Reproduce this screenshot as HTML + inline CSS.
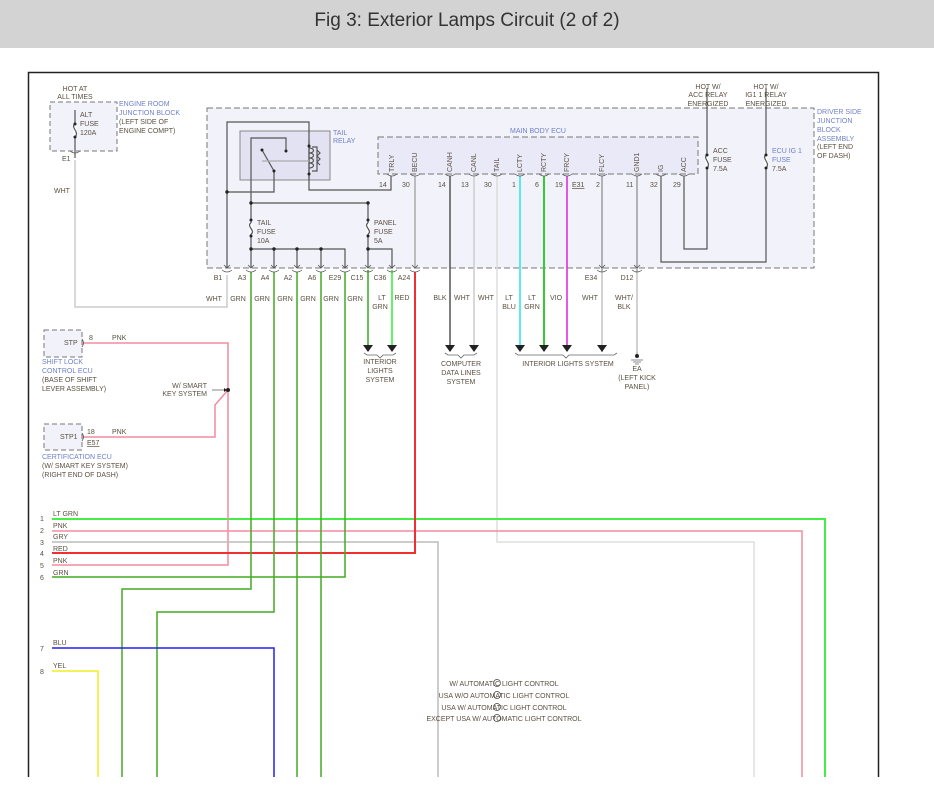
<!DOCTYPE html>
<html><head><meta charset="utf-8"><style>
html,body{margin:0;padding:0;background:#fff;width:934px;height:802px;overflow:hidden}
.hdr{position:absolute;left:0;top:0;width:934px;height:48px;background:#d3d3d3;text-align:center;font:19px "Liberation Sans",sans-serif;color:#333;line-height:42px}
svg{position:absolute;left:0;top:0}
text{font-family:"Liberation Sans",sans-serif;font-size:7px;fill:#5a5040}
.b{fill:#6f80c8}
</style></head><body>
<div class="hdr">Fig 3: Exterior Lamps Circuit (2 of 2)</div>
<svg width="934" height="802" viewBox="0 0 934 802">
<!-- frame -->
<path d="M28.5 777V72.5H878.5V777" fill="none" stroke="#222" stroke-width="1.5"/>
<!-- boxes -->
<rect x="207" y="108" width="607" height="160" fill="#f2f2fb" stroke="#777" stroke-dasharray="6,3"/>
<rect x="378" y="137" width="320" height="37" fill="#e9e9f7" stroke="#777" stroke-dasharray="6,3"/>
<rect x="240" y="131" width="90" height="49" fill="#e2e2f2" stroke="#888"/>
<rect x="50" y="102" width="67" height="49" fill="#f2f2fb" stroke="#777" stroke-dasharray="5,3"/>
<rect x="44" y="330" width="38" height="27" fill="#f2f2fb" stroke="#777" stroke-dasharray="5,3"/>
<rect x="44" y="424" width="38" height="26" fill="#f2f2fb" stroke="#777" stroke-dasharray="5,3"/>
<g fill="none" stroke-width="1.2">
<!-- internal JB wiring -->
<g stroke="#555">
<path d="M227 268V122H309V190H391V176"/>
<path d="M227 192H274V171L262 150"/>
<path d="M251 268V138H286V151"/>
<path d="M251 203H368V268"/>
<path d="M251 249H345V268M274 249V268M297 249V268M321 249V268M368 249H392V268"/>
<path d="M309 140V180"/>
<path d="M309 148c6 0 6 5 0 5c6 0 6 5 0 5c6 0 6 5 0 5c6 0 6 5 0 5" />
<path d="M312 147h5v24h-5M317 150l3 3l-3 3l3 3l-3 3l3 3"/>
<path d="M262 161H309" stroke="#aaa"/>
<path d="M661 176V262H766V88M684 176V249H707V88"/>
<path d="M75 110V158"/>
</g>
<!-- fuses -->
<g stroke="#fff" stroke-width="3"><path d="M251 223V234M368 223V234M707 155V168M766 155V168M75 124V137"/></g>
<g stroke="#555"><path d="M251 223c-5 3 5 8 0 11M368 223c-5 3 5 8 0 11M707 155c-5 3 5 8 0 13M766 155c-5 3 5 8 0 13M75 124c-5 3 5 8 0 13"/></g>
<!-- external wires -->
<path d="M75 160V307H227V275" stroke="#ccc" stroke-width="1.5"/>
<path d="M415 176V268" stroke="#aaa" stroke-width="1.5"/>
<path d="M602 176V352" stroke="#888"/>
<path d="M637 176V352" stroke="#888"/>
<path d="M602 272V352M637 272V352" stroke="#ccc" stroke-width="1.5"/>
<path d="M450 176V350" stroke="#555" stroke-width="1.5"/>
<path d="M474 176V350" stroke="#ccc" stroke-width="1.5"/>
<path d="M497 176V542H754V777" stroke="#ddd" stroke-width="1.5"/>
<path d="M520 176V350" stroke="#22e6ee" stroke-width="1.5"/>
<path d="M544 176V350" stroke="#33cc33" stroke-width="2"/>
<path d="M567 176V350" stroke="#dd22dd" stroke-width="1.5"/>
<path d="M368 270V350" stroke="#33aa22" stroke-width="1.5"/>
<path d="M392 270V350" stroke="#33ee33" stroke-width="1.5"/>
<path d="M52 519H825V777" stroke="#44ee44" stroke-width="2"/>
<path d="M82 343H228V565H52M52 531H802V777" stroke="#f08ca0" stroke-width="1.5"/>
<path d="M82 437H215V405L228 390" stroke="#f08ca0" stroke-width="1.5"/>
<path d="M52 542H438V777" stroke="#bbb" stroke-width="1.5"/>
<path d="M52 553H415V272" stroke="#f03030" stroke-width="2"/>
<g stroke="#44aa22" stroke-width="1.5">
<path d="M52 577H345V272M251 272V589H122V777M274 272V612H157V777M297 272V777M321 272V777"/>
</g>
<path d="M52 648H274V777" stroke="#2222ee" stroke-width="1.5"/>
<path d="M52 671H98V777" stroke="#eeee22" stroke-width="1.5"/>
<!-- brackets -->
<g stroke="#666" stroke-width="0.8">
<path d="M364 353l3 2h10l3 3l3-3h10l3-2"/>
<path d="M445 353l3 2h10l3 3l3-3h10l3-2"/>
<path d="M515 353l3 2h45l3 3l3-3h45l3-2"/>
<path d="M637 352V358M631 360h12M633 362h8M635 364h4"/>
<path d="M212 390H224"/>
</g>
</g>
<!-- arrows -->
<g fill="#222">
<path d="M363 345h10l-5 7zM387 345h10l-5 7zM445 345h10l-5 7zM469 345h10l-5 7zM515 345h10l-5 7zM539 345h10l-5 7zM562 345h10l-5 7zM597 345h10l-5 7z"/>
<circle cx="637" cy="356" r="2"/>
<circle cx="228" cy="390" r="2"/>
<path d="M224 388v4l3-2z"/>
<g>
<circle cx="227" cy="192" r="1.7"/><circle cx="251" cy="203" r="1.7"/><circle cx="251" cy="249" r="1.7"/>
<circle cx="274" cy="249" r="1.7"/><circle cx="297" cy="249" r="1.7"/><circle cx="321" cy="249" r="1.7"/>
<circle cx="368" cy="203" r="1.7"/><circle cx="368" cy="249" r="1.7"/><circle cx="251" cy="220" r="1.5"/><circle cx="251" cy="236" r="1.5"/>
<circle cx="368" cy="220" r="1.5"/><circle cx="368" cy="236" r="1.5"/><circle cx="707" cy="155" r="1.5"/><circle cx="707" cy="168" r="1.5"/>
<circle cx="766" cy="155" r="1.5"/><circle cx="766" cy="168" r="1.5"/><circle cx="75" cy="124" r="1.5"/><circle cx="75" cy="137" r="1.5"/>
<circle cx="262" cy="150" r="1.5"/><circle cx="286" cy="151" r="1.5"/><circle cx="274" cy="171" r="1.5"/>
<circle cx="309" cy="146" r="1.5"/><circle cx="309" cy="174" r="1.5"/>
</g>
</g>
<!-- pin chevrons -->
<g fill="none" stroke="#555" stroke-width="0.8">
<path d="M224 265l3 3l3-3M222 270q5 4 10 0M248 265l3 3l3-3M246 270q5 4 10 0M271 265l3 3l3-3M269 270q5 4 10 0M294 265l3 3l3-3M292 270q5 4 10 0M318 265l3 3l3-3M316 270q5 4 10 0M342 265l3 3l3-3M340 270q5 4 10 0M365 265l3 3l3-3M363 270q5 4 10 0M389 265l3 3l3-3M387 270q5 4 10 0M412 265l3 3l3-3M410 270q5 4 10 0M599 265l3 3l3-3M597 270q5 4 10 0M634 265l3 3l3-3M632 270q5 4 10 0"/>
<path d="M387 174q5 4 10 0M410 174q5 4 10 0M445 174q5 4 10 0M469 174q5 4 10 0M492 174q5 4 10 0M515 174q5 4 10 0M539 174q5 4 10 0M562 174q5 4 10 0M597 174q5 4 10 0M632 174q5 4 10 0M656 174q5 4 10 0M679 174q5 4 10 0"/>
<path d="M70 151q5 4 10 0M82 339q3 4 0 8M82 433q3 4 0 8"/>
</g>
<!-- texts -->
<text x="75" y="91" text-anchor="middle">HOT AT</text>
<text x="75" y="99" text-anchor="middle">ALL TIMES</text>
<text x="80" y="117">ALT</text><text x="80" y="126">FUSE</text><text x="80" y="135">120A</text>
<text class="b" x="119" y="106">ENGINE ROOM</text><text class="b" x="119" y="115">JUNCTION BLOCK</text>
<text x="119" y="124">(LEFT SIDE OF</text><text x="119" y="133">ENGINE COMPT)</text>
<text x="62" y="161">E1</text><text x="54" y="193">WHT</text>
<text class="b" x="333" y="135">TAIL</text><text class="b" x="333" y="143">RELAY</text>
<text class="b" x="538" y="133" text-anchor="middle">MAIN BODY ECU</text>
<text x="257" y="225">TAIL</text><text x="257" y="234">FUSE</text><text x="257" y="243">10A</text>
<text x="374" y="225">PANEL</text><text x="374" y="234">FUSE</text><text x="374" y="243">5A</text>
<g font-size="6.5">
<text transform="translate(394 172) rotate(-90)">TRLY</text>
<text transform="translate(417 172) rotate(-90)">BECU</text>
<text transform="translate(452 172) rotate(-90)">CANH</text>
<text transform="translate(476 172) rotate(-90)">CANL</text>
<text transform="translate(499 172) rotate(-90)">TAIL</text>
<text transform="translate(522 172) rotate(-90)">LCTY</text>
<text transform="translate(546 172) rotate(-90)">RCTY</text>
<text transform="translate(569 172) rotate(-90)">FRCY</text>
<text transform="translate(604 172) rotate(-90)">FLCY</text>
<text transform="translate(639 172) rotate(-90)">GND1</text>
<text transform="translate(663 172) rotate(-90)">IG</text>
<text transform="translate(686 172) rotate(-90)">ACC</text>
</g>
<text x="379" y="187">14</text><text x="402" y="187">30</text><text x="438" y="187">14</text><text x="461" y="187">13</text>
<text x="484" y="187">30</text><text x="512" y="187">1</text><text x="535" y="187">6</text><text x="555" y="187">19</text>
<text x="572" y="187" text-decoration="underline">E31</text><text x="596" y="187">2</text><text x="626" y="187">11</text>
<text x="650" y="187">32</text><text x="673" y="187">29</text>
<text x="708" y="89" text-anchor="middle">HOT W/</text><text x="708" y="97" text-anchor="middle">ACC RELAY</text><text x="708" y="106" text-anchor="middle">ENERGIZED</text>
<text x="766" y="89" text-anchor="middle">HOT W/</text><text x="766" y="97" text-anchor="middle">IG1 1 RELAY</text><text x="766" y="106" text-anchor="middle">ENERGIZED</text>
<text x="713" y="153">ACC</text><text x="713" y="162">FUSE</text><text x="713" y="171">7.5A</text>
<text class="b" x="772" y="153">ECU IG 1</text><text x="772" y="162" class="b">FUSE</text><text x="772" y="171">7.5A</text>
<text class="b" x="817" y="114">DRIVER SIDE</text><text class="b" x="817" y="123">JUNCTION</text><text class="b" x="817" y="132">BLOCK</text>
<text class="b" x="817" y="141">ASSEMBLY</text><text x="817" y="149">(LEFT END</text><text x="817" y="158">OF DASH)</text>
<g text-anchor="middle">
<text x="218" y="280">B1</text><text x="242" y="280">A3</text><text x="265" y="280">A4</text><text x="288" y="280">A2</text>
<text x="312" y="280">A6</text><text x="335" y="280">E29</text><text x="357" y="280">C15</text><text x="380" y="280">C36</text>
<text x="404" y="280">A24</text><text x="591" y="280">E34</text><text x="627" y="280">D12</text>
<text x="214" y="301">WHT</text><text x="238" y="301">GRN</text><text x="262" y="301">GRN</text><text x="285" y="301">GRN</text>
<text x="308" y="301">GRN</text><text x="331" y="301">GRN</text><text x="355" y="301">GRN</text>
<text x="382" y="300">LT</text><text x="380" y="309">GRN</text><text x="402" y="300">RED</text>
<text x="440" y="300">BLK</text><text x="462" y="300">WHT</text><text x="486" y="300">WHT</text>
<text x="509" y="300">LT</text><text x="509" y="309">BLU</text><text x="532" y="300">LT</text><text x="532" y="309">GRN</text>
<text x="556" y="300">VIO</text><text x="590" y="300">WHT</text><text x="624" y="300">WHT/</text><text x="624" y="309">BLK</text>
<text x="380" y="364">INTERIOR</text><text x="380" y="373">LIGHTS</text><text x="380" y="382">SYSTEM</text>
<text x="461" y="366">COMPUTER</text><text x="461" y="375">DATA LINES</text><text x="461" y="384">SYSTEM</text>
<text x="568" y="366">INTERIOR LIGHTS SYSTEM</text>
<text x="637" y="371">EA</text><text x="637" y="380">(LEFT KICK</text><text x="637" y="389">PANEL)</text>
</g>
<text x="64" y="345">STP</text><text x="89" y="340">8</text><text x="112" y="340">PNK</text>
<text class="b" x="42" y="364">SHIFT LOCK</text><text class="b" x="42" y="373">CONTROL ECU</text>
<text x="42" y="382">(BASE OF SHIFT</text><text x="42" y="391">LEVER ASSEMBLY)</text>
<text x="207" y="388" text-anchor="end">W/ SMART</text><text x="207" y="396" text-anchor="end">KEY SYSTEM</text>
<text x="60" y="439">STP1</text><text x="87" y="434">18</text><text x="112" y="434">PNK</text><text x="87" y="445" text-decoration="underline">E57</text>
<text class="b" x="42" y="459">CERTIFICATION ECU</text><text x="42" y="468">(W/ SMART KEY SYSTEM)</text><text x="42" y="477">(RIGHT END OF DASH)</text>
<text x="53" y="516">LT GRN</text><text x="40" y="521">1</text>
<text x="53" y="528">PNK</text><text x="40" y="533">2</text>
<text x="53" y="539">GRY</text><text x="40" y="545">3</text>
<text x="53" y="551">RED</text><text x="40" y="556">4</text>
<text x="53" y="563">PNK</text><text x="40" y="568">5</text>
<text x="53" y="575">GRN</text><text x="40" y="580">6</text>
<text x="53" y="645">BLU</text><text x="40" y="651">7</text>
<text x="53" y="668">YEL</text><text x="40" y="674">8</text>
<g text-anchor="middle">
<text x="504" y="686">W/ AUTOMATIC LIGHT CONTROL</text>
<text x="504" y="698">USA W/O AUTOMATIC LIGHT CONTROL</text>
<text x="504" y="710">USA W/ AUTOMATIC LIGHT CONTROL</text>
<text x="504" y="721">EXCEPT USA W/ AUTOMATIC LIGHT CONTROL</text>
</g>
<g fill="none" stroke="#444" stroke-width="0.7">
<circle cx="497" cy="683" r="3.5"/><circle cx="497" cy="695" r="3.5"/><circle cx="497" cy="707" r="3.5"/><circle cx="497" cy="718" r="3.5"/>
</g>
</svg>
</body></html>
